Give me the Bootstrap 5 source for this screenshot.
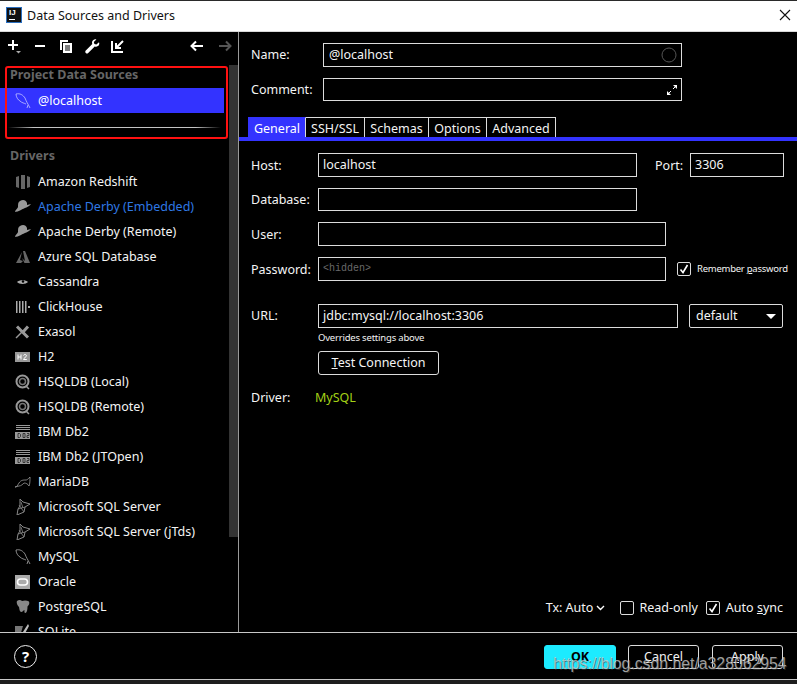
<!DOCTYPE html>
<html lang="en">
<head>
<meta charset="utf-8">
<title>Data Sources and Drivers</title>
<link href="https://cdn.jsdelivr.net/npm/bootstrap@5.3.0/dist/css/bootstrap.min.css" rel="stylesheet">
<style>
html,body{margin:0;background:#000;}
body{font-family:"Noto Sans","Open Sans",sans-serif;font-size:12.5px;line-height:18px;color:#f4f4f4;width:797px;height:684px;overflow:hidden;}
.dlg{width:797px;height:684px;position:relative;background:#000;}
.ttl{height:32px;background:#fff;color:#111;border-top:1px solid #2a2a2a;border-bottom:1px solid #d8d8d8;padding:0 0 2px 6px;}
.ttl-name{margin:2px 0 0 5px;}
.ttl-x{margin-right:6px;}
.ij{width:16px;height:16px;background:#111;border:1px solid #2a6fc0;color:#fff;font-size:8px;font-weight:700;line-height:8px;padding:1px 0 0 2px;font-family:"Liberation Sans",sans-serif;}
.ij i{display:block;width:6px;height:1px;background:#fff;margin-top:2px;}
.mid{height:600px;}
.side{width:239px;border-right:1px solid #9a9a9a;flex:none;}
.tbar{height:33px;padding:1px 0 0 1px;}
.tbar svg{display:block;flex:none;}
.tool{width:26px;height:26px;}
.tool-gap{margin-right:2px;}
.side-body{height:567px;overflow:hidden;}
.side-list{width:229px;flex:none;}
.sbar-wrap{width:9px;flex:none;}
.sbar{width:9px;height:472px;background:#333;}
.sec{font-weight:700;color:#666;padding-left:10px;}
.sec-a{height:23px;padding-top:1px;}
.sec-b{height:26px;padding-top:4px;}
.gapper{height:30px;padding:14px 8px 0;}
.fade-line{height:1px;background:linear-gradient(90deg,#000,#c4c4c4 12%,#c4c4c4 88%,#000);}
.list-group.drv{--bs-list-group-bg:transparent;--bs-list-group-border-width:0;--bs-list-group-color:#f4f4f4;border-radius:0;}
.drv .list-group-item{height:25px;padding:0 0 0 15px;display:flex;align-items:center;background:transparent;color:#f4f4f4;}
.drv .list-group-item svg,.sel svg{flex:none;width:16px;height:16px;margin-right:7px;}
.drv .drv-active{color:#2f78e4;}
.sel{height:25px;width:224px;background:#3333ff;padding-left:15px;color:#fff;}
.main{flex:1 1 auto;min-width:0;}
.lab{flex:none;}
.lab-n{width:84px;padding-left:12px;}
.lab-h{width:79px;padding-left:12px;}
.lab-d{margin-top:2px;}
.fld.form-control{background:#000;color:#f4f4f4;border:1px solid #dcdcdc;border-radius:0;font-size:12.5px;line-height:18px;padding:0 4px;display:flex;align-items:center;justify-content:space-between;min-height:0;height:24px;flex:none;}
.r-name{margin-top:11px;}
.r-com{margin-top:11px;}
.fld.form-control.w-name{width:359px;padding-left:5px;}
.r-com .fld.form-control{height:23px;padding-right:3px;}
.tabs-row{margin-top:16px;padding-left:9px;height:20px;}
.tb{height:20px;border:1px solid #dcdcdc;border-bottom:0;border-left:0;color:#f4f4f4;display:flex;align-items:center;justify-content:center;padding-top:2px;}
.tb-on{background:#3333ff;color:#fff;width:58px;border-left:1px solid #3333ff;border-top-color:#3333ff;}
.tb-2{width:59px}.tb-3{width:64px}.tb-4{width:58px}.tb-5{width:69px}
.blue-rule{height:4px;background:#3333ff;}
.r-host{margin-top:12px;}
.rw{margin-top:11px;}
.fld.form-control.h-23{height:23px;}
.w-a{width:319px;}.w-b{width:348px;}.w-c{width:360px;}
.port-l{margin-left:18px;width:35px;}
.w-port{width:94px;}
.hid{color:#6a6a6a;font-family:"Liberation Mono",monospace;font-size:10px;}
.chk{width:14px;height:14px;border:1px solid #dcdcdc;border-radius:2px;display:inline-flex;align-items:center;justify-content:center;flex:none;}
.rem{margin-left:11px;font-size:9.5px;letter-spacing:-.25px;white-space:nowrap;}
.rem-t{margin-left:6px;}
.r-url{margin-top:23px;}
.sel-box{width:94px;height:24px;border:1px solid #dcdcdc;border-radius:2px;margin-left:11px;padding:0 6px;flex:none;}
.caret-d{width:0;height:0;border-left:5px solid transparent;border-right:5px solid transparent;border-top:5px solid #fff;}
.hint{margin-left:79px;font-size:9.5px;line-height:14px;margin-top:3px;letter-spacing:-.2px;}
.btn.tc{--bs-btn-padding-x:0;--bs-btn-padding-y:0;margin-left:79px;margin-top:6px;width:121px;height:24px;border:1px solid #dcdcdc;border-radius:3px;color:#f4f4f4;font-size:12.5px;line-height:22px;background:#000;display:block;}
.r-drv{margin-top:14px;height:18px;}
.grn{color:#a3d116;margin-left:-3px;}
.opts{margin-top:auto;margin-bottom:15px;padding-right:14px;}
.chev{margin-left:3px;}
.ck-1{margin-left:15px;}
.ck-t{margin-left:6px;}
.ck-t5{margin-left:5px;}
.ck-2{margin-left:8px;}
.foot{height:47px;border-top:1px solid #c8c8c8;padding:12px 14px 0 14px;}
.help{width:23px;height:23px;border:1px solid #eee;border-radius:50%;font-weight:700;font-size:15px;line-height:21px;text-align:center;color:#fff;}
.btn.act{--bs-btn-padding-x:0;--bs-btn-padding-y:0;width:71px;height:24px;font-size:12.5px;line-height:22px;border:1px solid #dcdcdc;border-radius:3px;color:#f4f4f4;background:#000;}
.btn.act-ok{background:#1cebff;border-color:#1cebff;color:#000;font-weight:700;width:72px;margin-right:-1px;}
.gap-act{gap:13px;}
.under{height:5px;border-top:1px solid #c8c8c8;background:#1e1e1e;}
.red-box{position:absolute;left:5px;top:66px;width:223px;height:73px;border:2px solid #f11;border-radius:3px;pointer-events:none;}
.wm{position:absolute;left:553px;top:653px;font-family:"Liberation Sans",Arial,sans-serif;font-size:15.8px;line-height:22px;color:rgba(200,200,200,.78);white-space:nowrap;pointer-events:none;text-shadow:1px 1px 0 rgba(60,60,60,.6);}
</style>
</head>
<body>
<div class="dlg">
  <div class="ttl d-flex align-items-center">
    <div class="ij">IJ<i></i></div>
    <div class="ttl-name flex-grow-1">Data Sources and Drivers</div>
    <svg class="ttl-x" width="12" height="12" viewBox="0 0 12 12"><path d="M1 1l10 10M11 1L1 11" stroke="#111" stroke-width="1.100"/></svg>
  </div>

  <div class="mid d-flex">
    <div class="side d-flex flex-column">
      <div class="tbar d-flex align-items-start">
        <div class="tool d-flex align-items-center justify-content-center"><svg width="16" height="16" viewBox="0 0 16 16"><path d="M7 2v10M2 7h10" stroke="#fff" stroke-width="2"/><path d="M10 13h5l-2.500 2.500z" fill="#aaa"/></svg></div>
        <div class="tool d-flex align-items-center justify-content-center"><svg width="12" height="12" viewBox="0 0 12 12"><path d="M1 6h10" stroke="#fff" stroke-width="2"/></svg></div>
        <div class="tool d-flex align-items-center justify-content-center"><svg width="14" height="14" viewBox="0 0 14 14"><path d="M1 1h8v2H3v8H1z" fill="#fff"/><path d="M4 4h9v10H4z" fill="#fff"/><path d="M6 7h5M6 9h5M6 11h5" stroke="#000"/></svg></div>
        <div class="tool d-flex align-items-center justify-content-center"><svg width="15" height="15" viewBox="0 0 15 15"><path d="M14 3.200l-2.600 2.400-2-.6-.6-2L11.400.4C9.400-.2 7 1.200 7 3.600c0 .5.100 1 .3 1.400L.8 11.500c-.7.700-.7 1.700 0 2.400s1.700.7 2.400 0l6.500-6.500c.5.200 1 .3 1.500.3 2.400 0 3.700-2.300 2.800-4.500z" fill="#fff"/></svg></div>
        <div class="tool d-flex align-items-center justify-content-center"><svg width="14" height="14" viewBox="0 0 14 14"><path d="M1 2v11h11" stroke="#fff" stroke-width="2" fill="none"/><path d="M12 2L5.500 8.500M5 4v5h5" stroke="#fff" stroke-width="2" fill="none"/></svg></div>
        <div class="tool tool-gap ms-auto d-flex align-items-center justify-content-center"><svg width="14" height="12" viewBox="0 0 14 12"><path d="M13 6H2M6 1.500L1.500 6 6 10.500" stroke="#fff" stroke-width="2" fill="none"/></svg></div>
        <div class="tool d-flex align-items-center justify-content-center"><svg width="14" height="12" viewBox="0 0 14 12"><path d="M1 6h11M8 1.500L12.500 6 8 10.500" stroke="#555" stroke-width="2" fill="none"/></svg></div>
      </div>
      <div class="side-body d-flex">
        <div class="side-list">
          <div class="sec sec-a">Project Data Sources</div>
          <div class="sel d-flex align-items-center"><svg viewBox="0 0 16 16"><path d="M1 1C5 0 8 2 10 5c1 3 3 6 5 10M1 1c0 3 2 6 4 7 2 2 4 2 6 3M13 12l-1 3" fill="none" stroke="#c4c4ff" stroke-width=".8"/></svg>@localhost</div>
          <div class="gapper"><div class="fade-line"></div></div>
          <div class="sec sec-b">Drivers</div>
          <ul class="list-group list-group-flush drv">
            <li class="list-group-item"><svg viewBox="0 0 16 16"><path d="M1 3l3-1v12l-3-1zM6 1h4v14H6zM12 2l3 1v10l-3 1z" fill="#666"/></svg>Amazon Redshift</li>
            <li class="list-group-item drv-active"><svg viewBox="0 0 16 16"><path d="M5 2C8 0 11 1 12 4v2l4-1C14 8 9 9 6 11c-2 1-5 2-6 2 0-2 3-4 3-5 0-3 0-5 2-6z" fill="#999"/></svg>Apache Derby (Embedded)</li>
            <li class="list-group-item"><svg viewBox="0 0 16 16"><path d="M5 2C8 0 11 1 12 4v2l4-1C14 8 9 9 6 11c-2 1-5 2-6 2 0-2 3-4 3-5 0-3 0-5 2-6z" fill="#999"/></svg>Apache Derby (Remote)</li>
            <li class="list-group-item"><svg viewBox="0 0 16 16"><path d="M8 2l2 0 5 12H9.500L7 9l3 3zM7 3L1 14h5l2-2-3-1z" fill="#666"/></svg>Azure SQL Database</li>
            <li class="list-group-item"><svg viewBox="0 0 16 16"><path d="M2 8c2-2.500 9-2.500 11 0-2 2.500-9 2.500-11 0z" fill="#aaa"/><circle cx="8" cy="7.500" r="1.200" fill="#000"/></svg>Cassandra</li>
            <li class="list-group-item"><svg viewBox="0 0 16 16"><path d="M1 2h1.500v12H1zM4 2h1.500v12H4zM7 2h1.500v12H7zM10 2h1.500v12H10zM13 7h2v2h-2z" fill="#aaa"/></svg>ClickHouse</li>
            <li class="list-group-item"><svg viewBox="0 0 16 16"><path d="M2 2.500l11 11M13 2.500L8 8" stroke="#999" stroke-width="3"/><path d="M7 8l-6 6" stroke="#999" stroke-width="1.500"/></svg>Exasol</li>
            <li class="list-group-item"><svg viewBox="0 0 16 16"><rect y="3" width="15" height="10" fill="#999"/><path d="M3 5.500v5M6 5.500v5M3 8h3M8.500 6.500c.5-1.500 3-1.200 3 .3 0 1.200-3 2.200-3 3.700h3.300" stroke="#fff" stroke-width="1" fill="none"/></svg>H2</li>
            <li class="list-group-item"><svg viewBox="0 0 16 16"><circle cx="7.500" cy="7.500" r="6" fill="none" stroke="#999" stroke-width="2"/><circle cx="7.500" cy="7.500" r="3" fill="none" stroke="#777" stroke-width="1.500"/><path d="M11 12l3 3" stroke="#999" stroke-width="1.500"/></svg>HSQLDB (Local)</li>
            <li class="list-group-item"><svg viewBox="0 0 16 16"><circle cx="7.500" cy="7.500" r="6" fill="none" stroke="#999" stroke-width="2"/><circle cx="7.500" cy="7.500" r="3" fill="none" stroke="#777" stroke-width="1.500"/><path d="M11 12l3 3" stroke="#999" stroke-width="1.500"/></svg>HSQLDB (Remote)</li>
            <li class="list-group-item"><svg viewBox="0 0 16 16"><path d="M1 1.500h14M1 3.500h14M1 5.500h14" stroke="#999"/><rect y="8" width="15" height="7" fill="#999"/><path d="M3 9.500v4h1.500l1-1v-2l-1-1zM8 9.500v4h2v-4zM12 9.500h2v2h-2v2h2" stroke="#222" fill="none" stroke-width=".8"/></svg>IBM Db2</li>
            <li class="list-group-item"><svg viewBox="0 0 16 16"><path d="M1 1.500h14M1 3.500h14M1 5.500h14" stroke="#999"/><rect y="8" width="15" height="7" fill="#999"/><path d="M3 9.500v4h1.500l1-1v-2l-1-1zM8 9.500v4h2v-4zM12 9.500h2v2h-2v2h2" stroke="#222" fill="none" stroke-width=".8"/></svg>IBM Db2 (JTOpen)</li>
            <li class="list-group-item"><svg viewBox="0 0 16 16"><path d="M0 13c2 0 2-1 4-4s4-3 7-3c1 0 2-1 4-3 0 3 0 7-1 9-1-2-3-3-5-3-1 1-3 3-5 3z" fill="none" stroke="#999" stroke-width=".8"/></svg>MariaDB</li>
            <li class="list-group-item"><svg viewBox="0 0 16 16"><path d="M5 0l3 3 7 2-5 3-1 5-7 3 1-6 2-3z" fill="none" stroke="#888" stroke-width="1"/><path d="M3 10l7-2M4 6l5 7M6 3l2 6" stroke="#888" stroke-width=".8"/></svg>Microsoft SQL Server</li>
            <li class="list-group-item"><svg viewBox="0 0 16 16"><path d="M5 0l3 3 7 2-5 3-1 5-7 3 1-6 2-3z" fill="none" stroke="#888" stroke-width="1"/><path d="M3 10l7-2M4 6l5 7M6 3l2 6" stroke="#888" stroke-width=".8"/></svg>Microsoft SQL Server (jTds)</li>
            <li class="list-group-item"><svg viewBox="0 0 16 16"><path d="M1 1C5 0 8 2 10 5c1 3 3 6 5 10M1 1c0 3 2 6 4 7 2 2 4 2 6 3M13 12l-1 3" fill="none" stroke="#aaa" stroke-width=".8"/></svg>MySQL</li>
            <li class="list-group-item"><svg viewBox="0 0 16 16"><rect y="1" width="15" height="14" fill="#aaa"/><rect x="2.500" y="5" width="10" height="6" rx="3" fill="none" stroke="#fff" stroke-width="1.600"/></svg>Oracle</li>
            <li class="list-group-item"><svg viewBox="0 0 16 16"><path d="M2 2c2-1.500 4-1 5 0 2-.8 5-.8 7 .5 1 2-.5 4-1.500 5 0 3-.5 6-2 6.500-1.500 0-1-2-1-3-1.500.5-2 2-3 2-2 0-2-3-2.500-5C3 7 1 4 2 2z" fill="#888"/></svg>PostgreSQL</li>
            <li class="list-group-item"><svg viewBox="0 0 16 16"><path d="M0 2h8L5 12H0z" fill="#777"/><path d="M13 0l1 2-6 11-2 2 0-4z" fill="#bbb"/></svg>SQLite</li>
          </ul>
        </div>
        <div class="sbar-wrap"><div class="sbar"></div></div>
      </div>
    </div>

    <div class="main d-flex flex-column">
      <div class="r-name d-flex align-items-center">
        <div class="lab lab-n">Name:</div>
        <div class="fld form-control w-name"><span>@localhost</span><svg width="16" height="16" viewBox="0 0 16 16"><circle cx="8" cy="8" r="7" fill="none" stroke="#555"/></svg></div>
      </div>
      <div class="r-com d-flex align-items-center">
        <div class="lab lab-n">Comment:</div>
        <div class="fld form-control w-name justify-content-end"><svg width="12" height="12" viewBox="0 0 12 12"><path d="M7 1h4v4zM1 11V7l4 4z" fill="#fff"/><path d="M10 2L7 5M2 10l3-3" stroke="#fff"/></svg></div>
      </div>
      <div class="tabs-row d-flex">
        <div class="tb tb-on">General</div>
        <div class="tb tb-2">SSH/SSL</div>
        <div class="tb tb-3">Schemas</div>
        <div class="tb tb-4">Options</div>
        <div class="tb tb-5">Advanced</div>
      </div>
      <div class="blue-rule"></div>

      <div class="r-host d-flex align-items-center">
        <div class="lab lab-h lab-d">Host:</div>
        <div class="fld form-control w-a">localhost</div>
        <div class="lab port-l lab-d">Port:</div>
        <div class="fld form-control w-port">3306</div>
      </div>
      <div class="rw d-flex align-items-center">
        <div class="lab lab-h">Database:</div>
        <div class="fld form-control w-a h-23"></div>
      </div>
      <div class="rw d-flex align-items-center">
        <div class="lab lab-h lab-d">User:</div>
        <div class="fld form-control w-b"></div>
      </div>
      <div class="rw d-flex align-items-center">
        <div class="lab lab-h lab-d">Password:</div>
        <div class="fld form-control w-b"><span class="hid">&lt;hidden&gt;</span></div>
        <div class="rem d-flex align-items-center"><span class="chk"><svg width="10" height="10" viewBox="0 0 10 10"><path d="M1.500 5.500L4 8.500 8.500 1" stroke="#fff" stroke-width="1.600" fill="none"/></svg></span><span class="rem-t">Remember <u>p</u>assword</span></div>
      </div>
      <div class="r-url d-flex align-items-center">
        <div class="lab lab-h">URL:</div>
        <div class="fld form-control w-c">jdbc:mysql://localhost:3306</div>
        <div class="sel-box d-flex align-items-center justify-content-between"><span>default</span><span class="caret-d"></span></div>
      </div>
      <div class="hint">Overrides settings above</div>
      <button type="button" class="btn tc"><u>T</u>est Connection</button>
      <div class="r-drv d-flex align-items-center">
        <div class="lab lab-h">Driver:</div>
        <div class="grn">MySQL</div>
      </div>

      <div class="opts d-flex align-items-center justify-content-end">
        <span>Tx: Auto</span>
        <svg class="chev" width="9" height="6" viewBox="0 0 9 6"><path d="M1 1l3.500 3.500L8 1" stroke="#fff" stroke-width="1.400" fill="none"/></svg>
        <span class="chk ck-1"></span><span class="ck-t5">Read-only</span>
        <span class="chk ck-2"><svg width="10" height="10" viewBox="0 0 10 10"><path d="M1.500 5.500L4 8.500 8.500 1" stroke="#fff" stroke-width="1.600" fill="none"/></svg></span><span class="ck-t">Auto <u>s</u>ync</span>
      </div>
    </div>
  </div>

  <div class="foot d-flex justify-content-between align-items-start">
    <div class="help">?</div>
    <div class="d-flex gap-act">
      <button type="button" class="btn act act-ok">OK</button>
      <button type="button" class="btn act"><u>C</u>ancel</button>
      <button type="button" class="btn act"><u>A</u>pply</button>
    </div>
  </div>
  <div class="under"></div>

  <div class="red-box"></div>
  <div class="wm">https://blog.csdn.net/a328062954</div>
</div>
<script src="https://cdn.jsdelivr.net/npm/bootstrap@5.3.0/dist/js/bootstrap.bundle.min.js"></script>
</body>
</html>
